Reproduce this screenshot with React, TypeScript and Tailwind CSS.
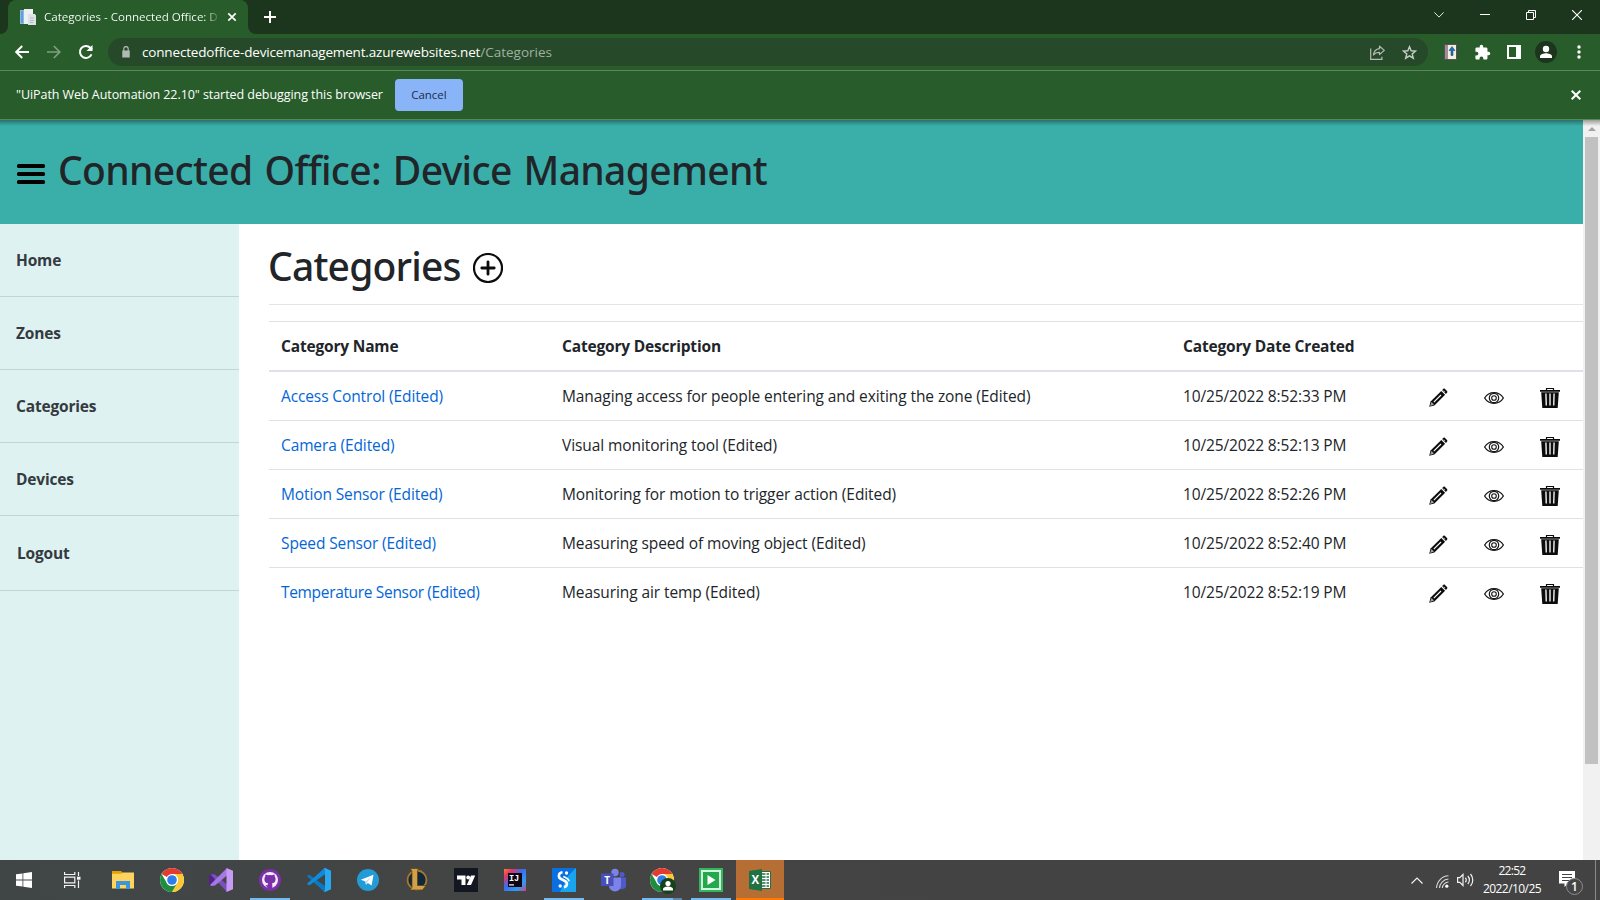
import type { ReactNode } from "react";

const menu = ["Home", "Zones", "Categories", "Devices"];

const rows = [
  { name: "Access Control (Edited)", desc: "Managing access for people entering and exiting the zone (Edited)", date: "10/25/2022 8:52:33 PM", tight: false },
  { name: "Camera (Edited)", desc: "Visual monitoring tool (Edited)", date: "10/25/2022 8:52:13 PM", tight: false },
  { name: "Motion Sensor (Edited)", desc: "Monitoring for motion to trigger action (Edited)", date: "10/25/2022 8:52:26 PM", tight: false },
  { name: "Speed Sensor (Edited)", desc: "Measuring speed of moving object (Edited)", date: "10/25/2022 8:52:40 PM", tight: false },
  { name: "Temperature Sensor (Edited)", desc: "Measuring air temp (Edited)", date: "10/25/2022 8:52:19 PM", tight: true },
];

/* ---------- browser chrome ---------- */

function WindowButton({ children }: { children: ReactNode }) {
  return <div className="flex h-[29px] w-[46px] items-center justify-center">{children}</div>;
}

function TabStrip() {
  return (
    <div className="flex h-[34px] shrink-0 items-start bg-[#1b361c]">
      <svg width="8" height="34" viewBox="0 0 8 34" className="shrink-0">
        <path d="M8 26 A8 8 0 0 1 0 34 H8 Z" fill="#285d2b" />
      </svg>
      <div className="flex h-[34px] w-[240px] items-center rounded-t-lg bg-[#285d2b] pl-3">
        <svg width="16" height="16" viewBox="0 0 16 16" className="shrink-0">
          <path d="M0 1h12v14H0z" fill="#f4f6f8" />
          <path d="M0 1h4v14H0z" fill="#8dbbe2" />
          <path d="M1 2h2v12H1z" fill="#5f9fd6" />
          <path d="M4 0h9v5h2l1 2v9H8v-1H4z" fill="#eef1f3" />
          <path d="M8 5h6l2 2v9H8z" fill="#dde2e6" />
          <path d="M10 9h4M10 11.500h4M10 13.500h3" stroke="#b6bdc2" strokeWidth="1" />
        </svg>
        <div className="ml-2 w-[176px] overflow-hidden bg-linear-to-r from-white from-92% to-transparent bg-clip-text text-[11.600px] tracking-[-0.03px] whitespace-nowrap text-transparent">
          Categories - Connected Office: D
        </div>
        <svg width="10" height="10" viewBox="0 0 10 10" className="ml-[7px] shrink-0">
          <path d="M1.300 1.300 8.700 8.700M8.700 1.300 1.300 8.700" stroke="#fff" strokeWidth="1.700" />
        </svg>
      </div>
      <svg width="8" height="34" viewBox="0 0 8 34" className="shrink-0">
        <path d="M0 26 A8 8 0 0 0 8 34 H0 Z" fill="#285d2b" />
      </svg>
      <svg width="12" height="12" viewBox="0 0 12 12" className="mt-[11px] ml-2 shrink-0">
        <path d="M6 0v12M0 6h12" stroke="#fff" strokeWidth="2" />
      </svg>
      <div className="ml-auto flex">
        <WindowButton>
          <svg width="10" height="6" viewBox="0 0 10 6"><path d="M.4.4 5 5.100 9.600.4" fill="none" stroke="#e6e9e6" /></svg>
        </WindowButton>
        <WindowButton>
          <svg width="10" height="1" viewBox="0 0 10 1"><path d="M0 0h10v1H0z" fill="#fff" /></svg>
        </WindowButton>
        <WindowButton>
          <svg width="10" height="10" viewBox="0 0 10 10">
            <path d="M.5 2.500h7v7h-7zM2.500 2.500v-2h7v7h-2" fill="none" stroke="#fff" />
          </svg>
        </WindowButton>
        <WindowButton>
          <svg width="10" height="10" viewBox="0 0 10 10"><path d="M0 0 10 10M10 0 0 10" stroke="#fff" strokeWidth="1.100" /></svg>
        </WindowButton>
      </div>
    </div>
  );
}

function ToolSlot({ children }: { children: ReactNode }) {
  return <div className="flex h-8 w-8 shrink-0 items-center justify-center">{children}</div>;
}

function Toolbar() {
  return (
    <div className="flex h-9 shrink-0 items-center bg-[#285d2b] pr-1.5 pl-1.5">
      <ToolSlot>
        <svg width="14" height="14" viewBox="0 0 14 14">
          <path d="M14 7H1.500M7.200 1 1.200 7l6 6" fill="none" stroke="#fff" strokeWidth="1.900" />
        </svg>
      </ToolSlot>
      <ToolSlot>
        <svg width="14" height="14" viewBox="0 0 14 14">
          <path d="M0 7h12.500M6.800 1l6 6-6 6" fill="none" stroke="#7f9f81" strokeWidth="1.700" />
        </svg>
      </ToolSlot>
      <ToolSlot>
        <svg width="16" height="16" viewBox="0 0 16 16">
          <path d="M13.500 10.300A6 6 0 1 1 12.300 3.800L14 5.500" fill="none" stroke="#fff" strokeWidth="2" />
          <path d="M14.500 1v6h-6z" fill="#fff" />
        </svg>
      </ToolSlot>
      <div className="ml-1.5 flex h-7 w-[1320px] items-center rounded-full bg-[#264a29] pr-[3px] pl-[14px]">
        <svg width="8" height="12" viewBox="0 0 9 12" preserveAspectRatio="none">
          <path d="M.3 4.500h8.400v7H.3z" fill="#b3b9b4" />
          <path d="M2 5V3a2.500 2.500 0 0 1 5 0v2" fill="none" stroke="#b3b9b4" strokeWidth="1.300" />
        </svg>
        <div className="ml-3 text-[13.500px] leading-7">
          <span className="tracking-[-0.17px] text-white">connectedoffice-devicemanagement.azurewebsites.net</span>
          <span className="text-[#9fb0a1]">/Categories</span>
        </div>
        <div className="ml-auto flex">
          <ToolSlot>
            <svg width="15" height="15" viewBox="0 0 15 15" fill="none" stroke="#b4bdb5" strokeWidth="1.200">
              <path d="M.7 3.500v10.800h11.200v-2.500" />
              <path d="M9.500 1.200 14.300 5.400 9.500 9.600V7.300C6.800 7.200 4.900 8.100 3.400 10c.5-3.500 2.600-6 6.100-6.400z" strokeLinejoin="round" />
            </svg>
          </ToolSlot>
          <ToolSlot>
            <svg width="15" height="15" viewBox="0 0 15 15">
              <path d="M7.500 1.700 9.200 5.800l4.400.3-3.400 2.800 1.100 4.300-3.800-2.400-3.800 2.400 1.100-4.300L1.400 6.100l4.400-.3z" fill="none" stroke="#c7cec8" strokeWidth="1.400" />
            </svg>
          </ToolSlot>
        </div>
      </div>
      <div className="ml-1.5 flex">
        <ToolSlot>
          <svg width="13" height="16" viewBox="0 0 13 16">
            <rect x=".5" y=".5" width="12" height="15" fill="#f4efd9" stroke="#5a4f5b" />
            <path d="M1 1h3v14H1z" fill="#9b8f98" />
            <path d="M8 2.500 11 6.500H9v5H7v-5H5z" fill="#1c6fc0" stroke="#123e73" strokeWidth=".5" />
          </svg>
        </ToolSlot>
        <ToolSlot>
          <svg width="17" height="17" viewBox="0 0 24 24" fill="#fff">
            <path d="M20.500 11H19V7c0-1.100-.9-2-2-2h-4V3.500a2.500 2.500 0 0 0-5 0V5H4c-1.100 0-2 .9-2 2v3.800h1.500a2.700 2.700 0 0 1 0 5.400H2V20c0 1.100.9 2 2 2h3.800v-1.500a2.700 2.700 0 0 1 5.400 0V22H17c1.100 0 2-.9 2-2v-4h1.500a2.500 2.500 0 0 0 0-5z" />
          </svg>
        </ToolSlot>
        <ToolSlot>
          <svg width="14" height="14" viewBox="0 0 14 14">
            <path d="M0 0h14v14H0zM2 2v10h7V2z" fill="#fff" fillRule="evenodd" />
          </svg>
        </ToolSlot>
        <ToolSlot>
          <svg width="22" height="22" viewBox="0 0 22 22">
            <circle cx="11" cy="11" r="11" fill="#1b361c" />
            <circle cx="11" cy="8" r="3.200" fill="#fff" />
            <path d="M5 17v-1.700C5 13.200 8.600 12.300 11 12.300s6 .9 6 3V17z" fill="#fff" />
          </svg>
        </ToolSlot>
        <ToolSlot>
          <svg width="4" height="14" viewBox="0 0 4 14" fill="#fff" className="ml-px">
            <circle cx="2" cy="2" r="1.700" />
            <circle cx="2" cy="7" r="1.700" />
            <circle cx="2" cy="12" r="1.700" />
          </svg>
        </ToolSlot>
      </div>
    </div>
  );
}

function InfoBar() {
  return (
    <div className="flex h-[50px] shrink-0 items-center border-y border-[#5b855d] bg-[#285d2b] pr-[19px] pl-4">
      <span className="pt-px text-[12.500px] tracking-[-0.06px] text-white">"UiPath Web Automation 22.10" started debugging this browser</span>
      <button className="ml-3 h-8 w-[68px] rounded bg-[#8ab4f8] text-[11.500px] text-[#202c45]">Cancel</button>
      <svg width="10" height="10" viewBox="0 0 10 10" className="ml-auto">
        <path d="M.7.700 9.300 9.300M9.300.7.7 9.300" stroke="#fff" strokeWidth="2" />
      </svg>
    </div>
  );
}

/* ---------- page ---------- */

function PencilIcon() {
  return (
    <svg width="20" height="20" viewBox="0 0 20 20" className="-ml-px">
      <path d="M1.200 18.800 2.600 13.600 13.300 2.900 17.100 6.700 6.400 17.400z" fill="#0c0c0c" />
      <path d="M14.100 2.100 15.300.9c.5-.5 1.200-.5 1.700 0L19 3c.5.5.5 1.200 0 1.700L17.900 5.900z" fill="#0c0c0c" />
      <path d="M5.800 14.200 13 7" stroke="#fff" strokeWidth="1.100" />
      <path d="M2 18 3.500 14 6 16.500z" fill="#a5a5a5" />
      <path d="M15.800 2.700 17.200 4.100" stroke="#bbb" strokeWidth=".9" />
    </svg>
  );
}

function EyeIcon() {
  return (
    <svg width="20" height="20" viewBox="0 0 20 20" fill="none" stroke="#161616">
      <path d="M.6 10C2.800 6.500 6.200 4.700 10 4.700S17.200 6.500 19.400 10C17.200 13.500 13.800 15.300 10 15.300S2.800 13.500.6 10z" strokeWidth="1.300" />
      <circle cx="10" cy="10" r="4.700" strokeWidth="1.200" />
      <circle cx="10" cy="10" r="2.300" strokeWidth="1.100" />
    </svg>
  );
}

function TrashIcon() {
  return (
    <svg width="20" height="20" viewBox="0 0 20 20">
      <path d="M6.500 2V.8c0-.3.200-.5.500-.5h6c.3 0 .5.200.5.500V2" fill="none" stroke="#0c0c0c" strokeWidth="1.200" />
      <path d="M0 1.900h20v1.800H0zM1.200 4.300h17.600L17.700 20H2.300z" fill="#0c0c0c" />
      <path d="M5.900 5.500 6.300 17.500M10 5.500v12M14.100 5.500 13.700 17.500" stroke="#e4e4e4" strokeWidth="1.500" />
    </svg>
  );
}

function PageHeader() {
  return (
    <header className="flex h-[104px] shrink-0 items-center bg-[#3aafa9] pl-[17px]">
      <svg width="28" height="20" viewBox="0 0 28 20" className="mt-1">
        <rect width="28" height="4" rx="1.500" />
        <rect y="8" width="28" height="4" rx="1.500" />
        <rect y="16" width="28" height="4" rx="1.500" />
      </svg>
      <h1 className="mb-[5px] ml-[13px] font-['Noto_Sans','Open_Sans',sans-serif] text-[39px] leading-[48px] font-medium tracking-[-0.66px] whitespace-nowrap text-[#212529] [word-spacing:2.400px]">
        Connected Office: Device Management
      </h1>
    </header>
  );
}

function Sidebar() {
  return (
    <nav className="w-[239px] shrink-0 bg-[#def2f1] text-[15.500px] font-bold tracking-[-0.18px] text-[#343a40]">
      {menu.map((m) => (
        <a key={m} className="flex h-[73px] items-center border-b border-[#c2d4d3] pt-0.5 pl-4">{m}</a>
      ))}
      <a className="flex h-[75px] items-center border-b border-[#c2d4d3] pt-0.5 pl-[17px]">Logout</a>
    </nav>
  );
}

function CategoryTable() {
  return (
    <table className="mt-4 w-full table-fixed border-separate border-spacing-0 text-left text-[15.500px] text-[#212529]">
      <colgroup>
        <col className="w-[281px]" />
        <col className="w-[621px]" />
        <col className="w-[246px]" />
        <col className="w-[55px]" />
        <col className="w-[56px]" />
        <col className="w-[55px]" />
      </colgroup>
      <thead>
        <tr className="h-[51px] tracking-[-0.18px] *:border-t *:border-b-2 *:border-[#dee2e6] *:px-3 *:pt-0.5">
          <th>Category Name</th>
          <th>Category Description</th>
          <th>Category Date Created</th>
          <th />
          <th />
          <th />
        </tr>
      </thead>
      <tbody>
        {rows.map((r) => (
          <tr key={r.date} className="h-[49px] tracking-[-0.12px] *:border-b *:border-[#dee2e6] *:px-3 *:pt-0.5 last:*:border-transparent">
            <td className={r.tight ? "tracking-[-0.33px] text-[#0366d6]" : "text-[#0366d6]"}>{r.name}</td>
            <td className="tracking-[-0.09px] whitespace-nowrap">{r.desc}</td>
            <td className="tracking-[-0.13px]">{r.date}</td>
            <td><div className="pt-0.5"><PencilIcon /></div></td>
            <td><div className="pt-0.5"><EyeIcon /></div></td>
            <td><div className="pt-0.5"><TrashIcon /></div></td>
          </tr>
        ))}
      </tbody>
    </table>
  );
}

function Scrollbar() {
  return (
    <div className="flex w-[17px] shrink-0 flex-col items-center bg-[#f1f1f1]">
      <div className="flex h-[17px] items-center">
        <svg width="8" height="4" viewBox="0 0 8 4"><path d="M0 4 4 0l4 4z" fill="#a3a3a3" /></svg>
      </div>
      <div className="h-[627px] w-[13px] self-center bg-[#c1c1c1]" />
    </div>
  );
}

/* ---------- taskbar ---------- */

function WindowsLogo() {
  return (
    <svg width="16" height="16" viewBox="0 0 16 16" fill="#fff">
      <path d="M0 2.300 6.500 1.400V7.600H0zM7.300 1.300 16 0v7.600H7.300zM0 8.400h6.500v6.200L0 13.700zM7.300 8.400H16V16l-8.700-1.300z" />
    </svg>
  );
}

function TaskViewIcon() {
  return (
    <svg width="17" height="16" viewBox="0 0 17 16" fill="none" stroke="#f4f4f4" strokeWidth="1.200">
      <path d="M.6 0v2.500h10.200V0M.6 5.100h10.200v5.800H.6zM.6 16v-2.500h10.200V16M14.500 0v4M14.500 8.500V16" />
      <path d="M13 4.700h3.500v3H13z" fill="#f4f4f4" stroke="none" />
    </svg>
  );
}

function ExplorerIcon() {
  return (
    <svg width="22" height="18" viewBox="0 0 22 18">
      <path d="M0 1.500h22V17.500H0z" fill="#ffd45e" />
      <path d="M0 0h9.500v2.800H0z" fill="#e8a302" />
      <path d="M4 10h14v8h-4v-4H8v4H4z" fill="#3b97dc" />
    </svg>
  );
}

function ChromeDisc() {
  return (
    <>
      <circle cx="12" cy="12" r="12" fill="#fff" />
      <path d="M12 12 1.610 6A12 12 0 0 1 22.390 6H12z" fill="#e33b2e" />
      <path d="M12 6h10.390A12 12 0 0 1 12 24l5.200-9A6 6 0 0 0 12 6z" fill="#fcc934" />
      <path d="M1.610 6A12 12 0 0 0 12 24l5.200-9a6 6 0 0 1-10.400 0z" fill="#1e8e3e" />
      <circle cx="12" cy="12" r="6" fill="#fff" />
      <circle cx="12" cy="12" r="4.800" fill="#2f7de9" />
    </>
  );
}

function ChromeIcon() {
  return <svg width="24" height="24" viewBox="0 0 24 24"><ChromeDisc /></svg>;
}

function ChromeProfileIcon() {
  return (
    <svg width="27" height="26" viewBox="0 0 27 26" className="ml-0.5">
      <ChromeDisc />
      <circle cx="18" cy="18" r="8" fill="#17401c" />
      <circle cx="18" cy="15.500" r="2.600" fill="#fff" />
      <path d="M13 22.500v-1.200c0-2 3-2.800 5-2.800s5 .8 5 2.800v1.200z" fill="#fff" />
    </svg>
  );
}

function VisualStudioIcon() {
  return (
    <svg width="24" height="24" viewBox="0 0 24 24">
      <path d="M0 7.500 2.500 6 5 8v8l-2.500 2L0 16.500z" fill="#52218a" />
      <path d="M2.500 6 6 6.500 18 16.500V24L2 7z" fill="#7a4fc0" />
      <path d="M18 0v7.500L6 17.500 2.500 18 1 17z" fill="#a877e6" />
      <path d="M17.500 0 24 2.800v18.400L17.500 24z" fill="#c89af8" />
    </svg>
  );
}

function GitHubIcon() {
  return (
    <svg width="22" height="22" viewBox="0 0 22 22">
      <circle cx="11" cy="11" r="11" fill="#7b2fa8" />
      <circle cx="11" cy="11" r="8" fill="#f3eef7" />
      <path d="M8.700 19v-2.700c-2.300.4-2.900-.9-3.500-1.700M13.300 19v-3.200c0-.8-.2-1.200-.6-1.500 2.100-.3 3.900-1.100 3.900-4.300 0-1-.4-1.800-.9-2.400.1-.6.100-1.400-.2-2.200-.8 0-1.600.4-2.300.9a8 8 0 0 0-4.400 0C8.100 5.800 7.300 5.400 6.500 5.400c-.3.800-.3 1.600-.2 2.200-.5.600-.9 1.400-.9 2.400 0 3.200 1.800 4 3.900 4.300-.4.300-.6.900-.6 1.500V19z" fill="#7b2fa8" />
    </svg>
  );
}

function VsCodeIcon() {
  return (
    <svg width="24" height="24" viewBox="0 0 24 24">
      <path d="M0 8.300 2 6.600 18.500 18.500V24L17 23.500z" fill="#0a79c4" />
      <path d="M18.500 0v6L2 17.400 0 15.700 17 .4z" fill="#0e8bdd" />
      <path d="M17 .2 18 0l6 2.800v18.400L18 24l-1-.4 1-1.600V2z" fill="#2aa9f3" />
    </svg>
  );
}

function TelegramIcon() {
  return (
    <svg width="22" height="22" viewBox="0 0 22 22">
      <circle cx="11" cy="11" r="11" fill="#239bd7" />
      <path d="M3.800 10.700 16.500 5.700 14.600 16.600 10.800 13.900 8.900 15.700 8.400 12.500z" fill="#fff" />
      <path d="M8.400 12.500 14.400 8 10 13.200 8.900 15.700z" fill="#b9d8ec" />
    </svg>
  );
}

function LeagueIcon() {
  return (
    <svg width="22" height="24" viewBox="0 0 22 24">
      <circle cx="11" cy="12" r="9.500" fill="#10283a" stroke="#a8772c" strokeWidth="1.800" />
      <path d="M4 .5h8.500L11.500 3v14.500H20L16.500 22H4l2-2.500V3z" fill="#d0a04a" stroke="#5b3c12" strokeWidth=".7" />
    </svg>
  );
}

function TradingViewIcon() {
  return (
    <svg width="24" height="24" viewBox="0 0 24 24">
      <path d="M0 0h24v24H0z" fill="#131722" />
      <path d="M3 7.500h8.500v9.500H7.500v-5.500H3zM17 7.500h4.200L17 17h-4.200z" fill="#fff" />
      <circle cx="14.200" cy="9.500" r="1.900" fill="#fff" />
    </svg>
  );
}

function IntelliJIcon() {
  return (
    <svg width="22" height="22" viewBox="0 0 22 22">
      <defs>
        <linearGradient id="ij" x1="0" y1="0" x2="1" y2="1">
          <stop offset="0" stopColor="#f7803a" />
          <stop offset=".2" stopColor="#e8355f" />
          <stop offset=".45" stopColor="#3b6cf0" />
          <stop offset=".75" stopColor="#2e9df2" />
          <stop offset="1" stopColor="#d0407f" />
        </linearGradient>
      </defs>
      <path d="M0 0h22v22H0z" fill="url(#ij)" />
      <path d="M4 4h14v14H4z" fill="#0d0514" />
      <text x="5" y="12.300" fill="#fff" fontSize="8.500" fontWeight="700" fontFamily="Liberation Mono, monospace">IJ</text>
      <path d="M5 15.300h5v1.200H5z" fill="#fff" />
    </svg>
  );
}

function StudioIcon() {
  return (
    <svg width="24" height="24" viewBox="0 0 24 24" fill="none" stroke="#fff">
      <path d="M0 0h24v24H0z" fill="#0a6fe0" stroke="none" />
      <path d="M24 0v24H8L16 8z" fill="#19a4ee" stroke="none" />
      <path d="M10.500 4.300C6.200 4.800 5.600 9.500 9.500 11.300L13 13c3 1.600 2.300 5.700-1 6.200" strokeWidth="2.600" />
      <path d="M11.300 8.500 14 9.800c1.800.9 2.800 2 3.200 3.500" strokeWidth="1.600" />
      <circle cx="14.500" cy="5" r="1.700" fill="#fff" stroke="none" />
      <circle cx="8.200" cy="18" r="1.700" fill="#fff" stroke="none" />
    </svg>
  );
}

function TeamsIcon() {
  return (
    <svg width="25" height="24" viewBox="0 0 25 24">
      <circle cx="21" cy="6.500" r="2.500" fill="#5059c9" />
      <path d="M17 9.500h8v6.500a4 4 0 0 1-8 2z" fill="#5059c9" />
      <circle cx="14" cy="4.500" r="3.700" fill="#7b83eb" />
      <path d="M8 9.500h12v8a6 6 0 0 1-12 0z" fill="#7b83eb" />
      <path d="M0 5.500h12.500V18H0z" fill="#4650b8" />
      <text x="6.200" y="15.500" textAnchor="middle" fill="#fff" fontSize="10" fontWeight="700" fontFamily="Open Sans, sans-serif">T</text>
    </svg>
  );
}

function RunnerIcon() {
  return (
    <svg width="24" height="24" viewBox="0 0 24 24">
      <path d="M0 0h24v24H0z" fill="#2dba59" />
      <path d="M3 3h18v18H3z" fill="#23a84d" stroke="#d7f3df" strokeWidth="2" />
      <path d="M8.500 7 16.500 12l-8 5z" fill="#fff" />
    </svg>
  );
}

function ExcelIcon() {
  return (
    <svg width="22" height="22" viewBox="0 0 22 22">
      <path d="M11 2.500h10.500v17H11z" fill="#fff" stroke="#207245" strokeWidth="1" />
      <path d="M13 5h3.500M13 8h3.500M13 11h3.500M13 14h3.500M13 17h3.500M17.500 5H20M17.500 8H20M17.500 11H20M17.500 14H20M17.500 17H20" stroke="#207245" strokeWidth="1.500" />
      <path d="M0 2 13 0v22L0 20z" fill="#207245" />
      <text x="6.400" y="15.200" textAnchor="middle" fill="#fff" fontSize="11.500" fontWeight="700" fontFamily="Open Sans, sans-serif">X</text>
    </svg>
  );
}

function TaskButton({ children, open }: { children: ReactNode; open?: boolean }) {
  return (
    <div className="mr-px flex h-10 w-12 flex-col items-center">
      <div className="flex h-[38px] items-center pt-0.5">{children}</div>
      {open && <div className="h-0.5 w-10 bg-[#76b9ed]" />}
    </div>
  );
}

function Taskbar() {
  return (
    <footer className="flex h-10 shrink-0 bg-linear-to-r from-[#404646] via-[#444444] via-35% to-[#434343] text-white">
      <div className="flex w-12 items-center justify-center"><WindowsLogo /></div>
      <div className="mr-[3px] flex w-12 items-center justify-center"><TaskViewIcon /></div>
      <TaskButton><ExplorerIcon /></TaskButton>
      <TaskButton><ChromeIcon /></TaskButton>
      <TaskButton><VisualStudioIcon /></TaskButton>
      <TaskButton open><GitHubIcon /></TaskButton>
      <TaskButton><VsCodeIcon /></TaskButton>
      <TaskButton><TelegramIcon /></TaskButton>
      <TaskButton><LeagueIcon /></TaskButton>
      <TaskButton><TradingViewIcon /></TaskButton>
      <TaskButton><IntelliJIcon /></TaskButton>
      <TaskButton open><StudioIcon /></TaskButton>
      <TaskButton><TeamsIcon /></TaskButton>
      <div className="mr-px flex h-10 w-12 flex-col items-center">
        <div className="flex h-[38px] items-center pt-1"><ChromeProfileIcon /></div>
        <div className="flex h-0.5 w-10 bg-[#76b9ed]"><div className="ml-auto h-0.5 w-[9px] bg-[#5b89ad]" /></div>
      </div>
      <TaskButton open><RunnerIcon /></TaskButton>
      <div className="flex h-10 w-12 flex-col items-center bg-[#b66e35]">
        <div className="flex h-[38px] items-center pt-0.5"><ExcelIcon /></div>
        <div className="h-0.5 w-full bg-[#ff7a00]" />
      </div>
      <div className="ml-auto flex items-center">
        <svg width="12" height="7" viewBox="0 0 12 7"><path d="M.5 6.500 6 1l5.500 5.500" fill="none" stroke="#f2f2f2" strokeWidth="1.200" /></svg>
        <svg width="13" height="13" viewBox="0 0 13 13" className="mt-0.5 ml-[13px]" fill="none" stroke="#d8d8d8" strokeWidth="1.100">
          <path d="M.6 13A12.400 12.400 0 0 1 12.500.8M3.500 13A9.500 9.500 0 0 1 12.500 4M6.300 13a6.500 6.500 0 0 1 6.200-6" />
          <circle cx="10.800" cy="11.200" r="1.600" fill="#fff" stroke="none" />
        </svg>
        <svg width="17" height="14" viewBox="0 0 17 14" className="ml-2" fill="none" stroke="#f2f2f2" strokeWidth="1.200">
          <path d="M.6 4.700h2.200L6 1.500v11L2.800 9.300H.6z" />
          <path d="M8.300 4.800a3 3 0 0 1 0 4.400M10.800 3a5.800 5.800 0 0 1 0 8M13.500 1a9 9 0 0 1 0 12" />
        </svg>
        <div className="ml-[3px] flex w-[70px] flex-col items-center text-[12px] leading-[18px]">
          <span className="tracking-[-0.7px]">22:52</span>
          <span className="tracking-[-0.55px]">2022/10/25</span>
        </div>
        <svg width="26" height="26" viewBox="0 0 26 26" className="mt-[7px] ml-3">
          <path d="M0 0h16v12.500H9L5.500 16v-3.500H0z" fill="#fff" />
          <path d="M3 3.500h10M3 6.500h10M3 9.500h10" stroke="#444" strokeWidth="1" />
          <circle cx="15.500" cy="15.500" r="8" fill="#454545" stroke="#8e8e8e" strokeWidth="1" />
          <text x="15.500" y="19.700" textAnchor="middle" fill="#fff" fontSize="12" fontWeight="600" fontFamily="Open Sans, sans-serif">1</text>
        </svg>
        <div className="mr-1 ml-[10px] h-10 w-px bg-[#8a8a8a]" />
      </div>
    </footer>
  );
}

export default function App() {
  return (
    <div className="flex h-[900px] w-[1600px] flex-col overflow-hidden bg-white font-['Open_Sans','Noto_Sans',sans-serif]">
      <TabStrip />
      <Toolbar />
      <InfoBar />
      <div className="relative flex min-h-0 flex-1">
        <div className="flex min-w-0 flex-1 flex-col">
          <PageHeader />
          <div className="flex min-h-0 flex-1">
            <Sidebar />
            <main className="min-w-0 flex-1 pl-[30px]">
              <div className="flex h-20 items-center">
                <h1 className="-ml-px mt-[3px] font-['Noto_Sans','Open_Sans',sans-serif] text-[39px] leading-[48px] font-medium tracking-[-0.8px] text-[#212529]">
                  Categories
                </h1>
                <svg width="30" height="30" viewBox="0 0 30 30" className="mt-2 ml-3" fill="none" stroke="#0c0c0c">
                  <circle cx="15" cy="15" r="14" strokeWidth="2.200" />
                  <path d="M15 8.800v12.400M8.800 15h12.400" strokeWidth="2.800" strokeLinecap="round" />
                </svg>
              </div>
              <div className="h-px bg-[#e5e5e5]" />
              <CategoryTable />
            </main>
          </div>
        </div>
        <Scrollbar />
        <div className="absolute inset-x-0 top-0 h-1.5 bg-linear-to-b from-black/35 to-transparent" />
      </div>
      <Taskbar />
    </div>
  );
}
